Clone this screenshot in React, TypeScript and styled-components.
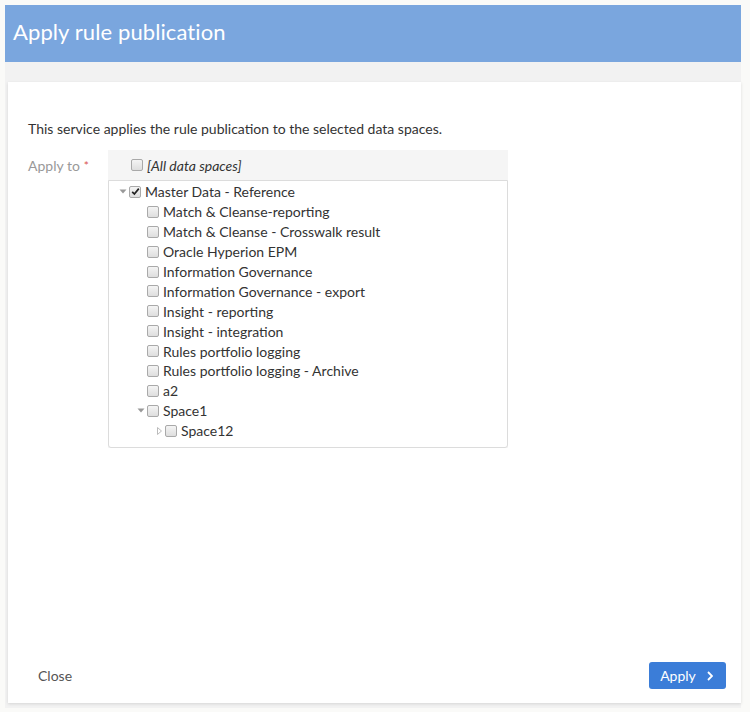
import React from "react";
import styled, { createGlobalStyle } from "styled-components";

const Global = createGlobalStyle`
  html, body { margin: 0; padding: 0; background: #fafaf8; }
  body { font-family: Lato, "Open Sans", "Liberation Sans", sans-serif; }
  * { box-sizing: border-box; }
`;

const Dialog = styled.div`
  margin: 5px 0 0 5px;
  width: 736px;
  height: 703px;
  background: #f2f2f2;
  display: flex;
  flex-direction: column;
`;

const Header = styled.div`
  height: 57px;
  background: #7aa6de;
  display: flex;
  align-items: center;
  padding: 0 0 5px 8px;
  flex-shrink: 0;
`;

const Title = styled.h1`
  margin: 0;
  color: #fff;
  font-weight: 400;
  font-size: 22px;
  letter-spacing: 0.1px;
`;

const Card = styled.div`
  margin: 20px 0 0 3px;
  height: 621px;
  background: #fff;
  box-shadow: 0 1px 3px rgba(0, 0, 0, 0.12);
  display: flex;
  flex-direction: column;
  padding: 38px 0 14px 20px;
`;

const Description = styled.p`
  margin: 0 0 12px 0;
  font-size: 14px;
  line-height: 18px;
  color: #333;
`;

const FormRow = styled.div`
  display: flex;
  align-items: flex-start;
`;

const Label = styled.div`
  width: 80px;
  padding-top: 7px;
  font-size: 14px;
  line-height: 18px;
  color: #999;
`;

const Required = styled.span`
  color: #d9534f;
  margin-left: 4px;
  font-size: 12px;
  vertical-align: top;
`;

const TreePanel = styled.div`
  width: 400px;
  background: #f5f5f5;
`;

const AllRow = styled.div`
  height: 30px;
  display: flex;
  align-items: center;
  padding-left: 23px;
  gap: 0;
  font-size: 14px;
  font-style: italic;
  color: #333;
`;

const TreeBox = styled.div`
  background: #fff;
  border: 1px solid #dcdcdc;
  border-radius: 0 0 3px 3px;
  padding: 1px 0 6px 0;
`;

const Row = styled.div<{ $depth: number }>`
  height: 19.9px;
  display: flex;
  align-items: center;
  padding-left: ${(p) => 8 + p.$depth * 18}px;
  font-size: 14px;
  color: #333;
  white-space: nowrap;
`;

const Toggle = styled.span`
  width: 12px;
  height: 12px;
  display: inline-flex;
  align-items: center;
  justify-content: center;
  flex-shrink: 0;
`;

const Box = styled.span<{ $checked?: boolean }>`
  width: 12px;
  height: 12px;
  border: 1px solid #a9a9a9;
  border-radius: 2px;
  background: linear-gradient(#f4f4f4, #dedede);
  display: inline-flex;
  align-items: center;
  justify-content: center;
  flex-shrink: 0;
  margin-right: 4px;
`;

const Footer = styled.div`
  margin-top: auto;
  display: flex;
  align-items: center;
  justify-content: space-between;
  padding: 0 15px 0 10px;
`;

const CloseButton = styled.button`
  border: none;
  background: none;
  font-family: inherit;
  font-size: 14px;
  color: #555;
  padding: 0;
  cursor: pointer;
`;

const ApplyButton = styled.button`
  width: 77px;
  height: 27px;
  border: none;
  border-radius: 3px;
  background: #3b7dd8;
  color: #fff;
  font-family: inherit;
  font-size: 14px;
  display: flex;
  align-items: center;
  justify-content: center;
  gap: 11px;
  padding: 0 2px 0 0;
`;

const Checkbox = ({ checked }: { checked?: boolean }) => (
  <Box $checked={checked}>
    {checked && (
      <svg width="9" height="9" viewBox="0 0 9 9">
        <path d="M1.2 4.8 L3.4 7 L7.8 1.6" fill="none" stroke="#222" strokeWidth="1.7" />
      </svg>
    )}
  </Box>
);

type Node = { label: string; depth: number; toggle?: "open" | "closed"; checked?: boolean };

const nodes: Node[] = [
  { label: "Master Data - Reference", depth: 0, toggle: "open", checked: true },
  { label: "Match & Cleanse-reporting", depth: 1 },
  { label: "Match & Cleanse - Crosswalk result", depth: 1 },
  { label: "Oracle Hyperion EPM", depth: 1 },
  { label: "Information Governance", depth: 1 },
  { label: "Information Governance - export", depth: 1 },
  { label: "Insight - reporting", depth: 1 },
  { label: "Insight - integration", depth: 1 },
  { label: "Rules portfolio logging", depth: 1 },
  { label: "Rules portfolio logging - Archive", depth: 1 },
  { label: "a2", depth: 1 },
  { label: "Space1", depth: 1, toggle: "open" },
  { label: "Space12", depth: 2, toggle: "closed" },
];

export default function App() {
  return (
    <>
      <Global />
      <Dialog>
        <Header>
          <Title>Apply rule publication</Title>
        </Header>
        <Card>
          <Description>This service applies the rule publication to the selected data spaces.</Description>
          <FormRow>
            <Label>
              Apply to<Required>*</Required>
            </Label>
            <TreePanel>
              <AllRow>
                <Checkbox />
                <span>[All data spaces]</span>
              </AllRow>
              <TreeBox>
                {nodes.map((n) => (
                  <Row key={n.label} $depth={n.depth}>
                    <Toggle>
                      {n.toggle === "open" && (
                        <svg width="8" height="5" viewBox="0 0 8 5">
                          <path d="M0.5 0.5 L7.5 0.5 L4 4.5 Z" fill="#999" />
                        </svg>
                      )}
                      {n.toggle === "closed" && (
                        <svg width="5" height="8" viewBox="0 0 5 8">
                          <path d="M0.5 0.5 L4.5 4 L0.5 7.5 Z" fill="none" stroke="#bbb" strokeWidth="1" />
                        </svg>
                      )}
                    </Toggle>
                    <Checkbox checked={n.checked} />
                    <span>{n.label}</span>
                  </Row>
                ))}
              </TreeBox>
            </TreePanel>
          </FormRow>
          <Footer>
            <CloseButton>Close</CloseButton>
            <ApplyButton>
              <span>Apply</span>
              <svg width="6" height="10" viewBox="0 0 6 10">
                <path d="M1 1 L5 5 L1 9" fill="none" stroke="#fff" strokeWidth="1.8" />
              </svg>
            </ApplyButton>
          </Footer>
        </Card>
      </Dialog>
    </>
  );
}
